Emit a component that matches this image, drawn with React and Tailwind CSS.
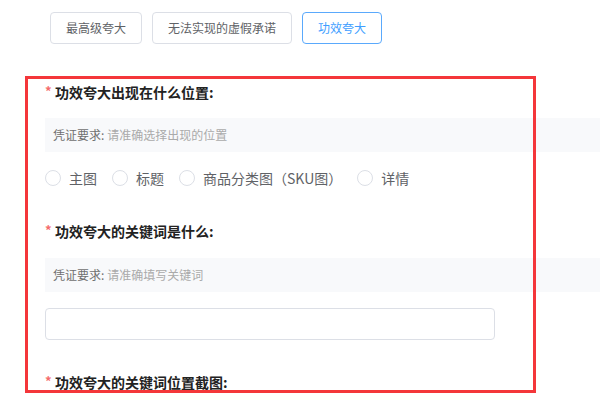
import React, { useState } from 'react';

const tabs = ['最高级夸大', '无法实现的虚假承诺', '功效夸大'];
const positions = ['主图', '标题', '商品分类图（SKU图）', '详情'];

const Heading = ({ children, className = '' }) => (
    <div className={`flex items-center h-[20px] text-[14px] font-bold text-[#222] ${className}`}>
        <span className="text-[#f56c6c] w-[10px] text-[13px] leading-none -mt-[3px]">*</span>
        <span>{children}</span>
    </div>
);

const Hint = ({ text, className = '' }) => (
    <div className={`h-[34px] bg-[#f8f9fb] flex items-center pl-[8px] text-[12px] ${className}`}>
        <span className="text-[#707070]">凭证要求:</span>
        <span className="text-[#aaa] ml-[3px]">{text}</span>
    </div>
);

const App = () => {
    const [active, setActive] = useState(2);
    const [picked, setPicked] = useState(null);
    const [keyword, setKeyword] = useState('');

    return (
        <div className="relative w-[600px] h-[400px] overflow-hidden bg-white" style={{ fontFamily: '"Noto Sans CJK SC", "Noto Sans", sans-serif' }}>
            <div className="pt-[12px]">
                {/* type tabs */}
                <div className="flex gap-[10px] pl-[50px]">
                    {tabs.map((t, i) => (
                        <button
                            key={t}
                            onClick={() => setActive(i)}
                            className={`h-[32px] px-[15px] rounded-[4px] border text-[12px] bg-white cursor-pointer ${
                                active === i ? 'border-[#5aa9fc] text-[#409eff]' : 'border-[#dcdfe6] text-[#606266]'
                            }`}
                        >
                            {t}
                        </button>
                    ))}
                </div>

                <div className="pl-[45px]">
                    <Heading className="mt-[38px]">功效夸大出现在什么位置:</Heading>
                    <Hint text="请准确选择出现的位置" className="mt-[16px]" />

                    <div className="flex items-center h-[20px] mt-[16px] text-[14px] text-[#606266]">
                        {positions.map((p) => (
                            <label key={p} onClick={() => setPicked(p)} className="flex items-center mr-[15px] cursor-pointer">
                                <span className={`w-[16px] h-[16px] rounded-full border bg-white ${picked === p ? 'border-[#409eff] border-[5px]' : 'border-[#dcdfe6]'}`} />
                                <span className="ml-[8px]">{p}</span>
                            </label>
                        ))}
                    </div>

                    <Heading className="mt-[33px]">功效夸大的关键词是什么:</Heading>
                    <Hint text="请准确填写关键词" className="mt-[17px]" />

                    <input
                        value={keyword}
                        onChange={(e) => setKeyword(e.target.value)}
                        className="block mt-[16px] w-[450px] h-[32px] border border-[#dcdfe6] rounded-[4px] px-[12px] text-[13px] text-[#606266] outline-none"
                    />

                    <Heading className="mt-[32px]">功效夸大的关键词位置截图:</Heading>
                </div>
            </div>

            {/* annotation frame */}
            <div className="absolute left-[25px] top-[76px] w-[511px] h-[317px] border-[3px] border-[#f4363a] pointer-events-none" />
        </div>
    );
};

export default App;
